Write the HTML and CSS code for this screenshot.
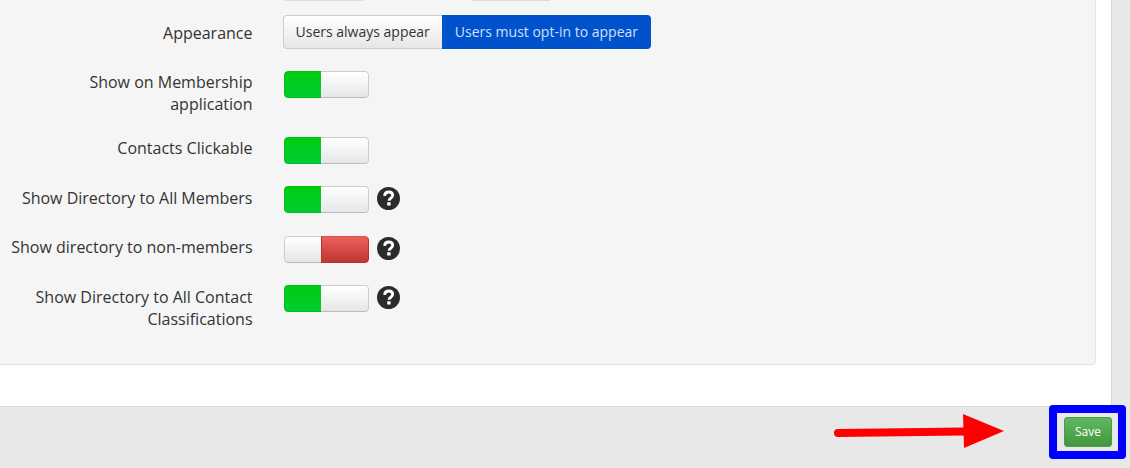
FILE: index.html
```html
<!DOCTYPE html>
<html lang="en">
<head>
<meta charset="UTF-8">
<meta name="viewport" content="width=device-width, initial-scale=1.0">
<title>Directory Settings</title>
<link rel="stylesheet" href="styles.css">
</head>
<body>
<div class="panel">
    <div class="well">
        <div class="cut-off">
            <span class="cut-one"></span>
            <span class="cut-two"></span>
        </div>

        <div class="row">
            <label class="row-label row-label-group">Appearance</label>
            <div class="btn-group">
                <button class="btn">Users always appear</button>
                <button class="btn btn-active">Users must opt-in to appear</button>
            </div>
        </div>

        <div class="row">
            <label class="row-label">Show on Membership application</label>
            <div class="switch"><span class="on"></span><span class="blank"></span></div>
        </div>

        <div class="row">
            <label class="row-label">Contacts Clickable</label>
            <div class="switch"><span class="on"></span><span class="blank"></span></div>
        </div>

        <div class="row row-help">
            <label class="row-label row-label-low">Show Directory to All Members</label>
            <div class="switch"><span class="on"></span><span class="blank"></span></div>
            <svg class="help" viewBox="0 0 23 23"><circle cx="11.5" cy="11.5" r="11.5"/><path d="M7.6 8.8C7.8 6.4 9.5 5 11.7 5c2.4 0 4 1.4 4 3.3 0 2.6-3.6 2.8-3.7 5.4"/><rect x="10.2" y="15.3" width="3.4" height="3.2"/></svg>
        </div>

        <div class="row row-help">
            <label class="row-label">Show directory to non-members</label>
            <div class="switch"><span class="blank blank-left"></span><span class="off"></span></div>
            <svg class="help" viewBox="0 0 23 23"><circle cx="11.5" cy="11.5" r="11.5"/><path d="M7.6 8.8C7.8 6.4 9.5 5 11.7 5c2.4 0 4 1.4 4 3.3 0 2.6-3.6 2.8-3.7 5.4"/><rect x="10.2" y="15.3" width="3.4" height="3.2"/></svg>
        </div>

        <div class="row">
            <label class="row-label row-label-low">Show Directory to All Contact Classifications</label>
            <div class="switch"><span class="on"></span><span class="blank"></span></div>
            <svg class="help" viewBox="0 0 23 23"><circle cx="11.5" cy="11.5" r="11.5"/><path d="M7.6 8.8C7.8 6.4 9.5 5 11.7 5c2.4 0 4 1.4 4 3.3 0 2.6-3.6 2.8-3.7 5.4"/><rect x="10.2" y="15.3" width="3.4" height="3.2"/></svg>
        </div>
    </div>
</div>

<div class="footer">
    <div class="highlight">
        <button class="save">Save</button>
    </div>
</div>

<svg class="arrow" viewBox="0 0 180 40" width="180" height="40">
    <path class="arrow-line" d="M8 23 L134 21.5"/>
    <polygon class="arrow-head" points="133,4 174,21 134,38"/>
</svg>
</body>
</html>
```

FILE: styles.css
```css
html, body {
    height: 100%;
}
body {
    font-family: "Open Sans", Arial, sans-serif;
    font-size: 14px;
    line-height: 22px;
    color: #333;
    margin: 0;
    background-color: #e8e8e8;
    overflow: hidden;
    position: relative;
}
.panel {
    width: 1111px;
    height: 406px;
    background-color: #fff;
    border-right: 1px solid #d8d8d8;
    border-bottom: 1px solid #d8d8d8;
    border-bottom-right-radius: 3px;
}
.well {
    width: 1095px;
    height: 364px;
    background-color: #f5f5f5;
    border-right: 1px solid #e3e3e3;
    border-bottom: 1px solid #e3e3e3;
    border-bottom-right-radius: 4px;
    display: flex;
    flex-direction: column;
    gap: 22px;
}
.cut-off {
    display: flex;
    height: 1px;
    margin-bottom: -8px;
    padding-left: 285px;
    gap: 108px;
}
.cut-off span {
    background-color: #ddd;
}
.cut-one {
    width: 79px;
}
.cut-two {
    width: 78px;
}
.row {
    display: flex;
    align-items: flex-start;
}
.row-help {
    min-height: 27.5px;
}
.row-label {
    width: 252.5px;
    box-sizing: border-box;
    padding-left: 8px;
    font-size: 16px;
    text-align: right;
    flex-shrink: 0;
    margin-right: 31.5px;
}
.row-label-group {
    margin-right: 30.5px;
    padding-top: 7px;
}
.row-label-low {
    padding-top: 1px;
}
.btn-group {
    display: flex;
}
.btn {
    font-family: inherit;
    font-size: 14px;
    line-height: 20px;
    height: 34px;
    padding: 0 12.5px 0 11.5px;
    color: #333;
    border: 1px solid #ccc;
    border-right: none;
    border-radius: 4px 0 0 4px;
    background: linear-gradient(#fff, #e6e6e6);
}
.btn-active {
    padding: 0 11.5px 0 12.5px;
    color: #cfe0fb;
    background: #0052cc;
    border: 1px solid #0052cc;
    border-left: none;
    border-radius: 0 4px 4px 0;
}
.switch {
    display: flex;
    width: 85px;
    height: 27px;
    border-radius: 4px;
    overflow: hidden;
}
.switch span {
    display: block;
    box-sizing: border-box;
}
.switch .on {
    width: 37px;
    border: 1px solid #00c018;
    border-right: none;
    border-radius: 4px 0 0 4px;
    background: linear-gradient(#00cc11, #00cc33);
}
.switch .off {
    width: 48px;
    border: 1px solid #b5322d;
    border-top-color: #d9534f;
    border-radius: 0 4px 4px 0;
    background: linear-gradient(#ee5f5b, #bd362f);
}
.switch .blank {
    flex: 1;
    border: 1px solid #ccc;
    border-bottom-color: #bbb;
    border-left: none;
    border-radius: 0 4px 4px 0;
    background: linear-gradient(#fff, #e6e6e6);
}
.switch .blank-left {
    border-left: 1px solid #ccc;
    border-right: none;
    border-radius: 4px 0 0 4px;
}
.help {
    width: 23px;
    height: 23px;
    margin: 1px 0 0 8px;
}
.help circle {
    fill: #2b2b2b;
}
.help path {
    fill: none;
    stroke: #fff;
    stroke-width: 2.8;
}
.help rect {
    fill: #fff;
}
.footer {
    display: flex;
    justify-content: flex-end;
    padding-right: 4px;
}
.highlight {
    display: flex;
    margin-top: -2px;
    padding: 4px 6px 4px 7px;
    border: 8px solid #0000ff;
    border-radius: 4px;
    background-color: #e8e8e8;
}
.save {
    font-family: inherit;
    font-size: 12px;
    width: 48px;
    height: 30px;
    padding: 0 0 2px;
    color: #fff;
    border: 1px solid #4a9c4a;
    border-radius: 3px;
    background: linear-gradient(#62b862, #43963f);
}
.arrow {
    position: absolute;
    left: 830px;
    top: 410px;
}
.arrow-line {
    fill: none;
    stroke: #ff0000;
    stroke-width: 8;
    stroke-linecap: round;
}
.arrow-head {
    fill: #ff0000;
}
```
